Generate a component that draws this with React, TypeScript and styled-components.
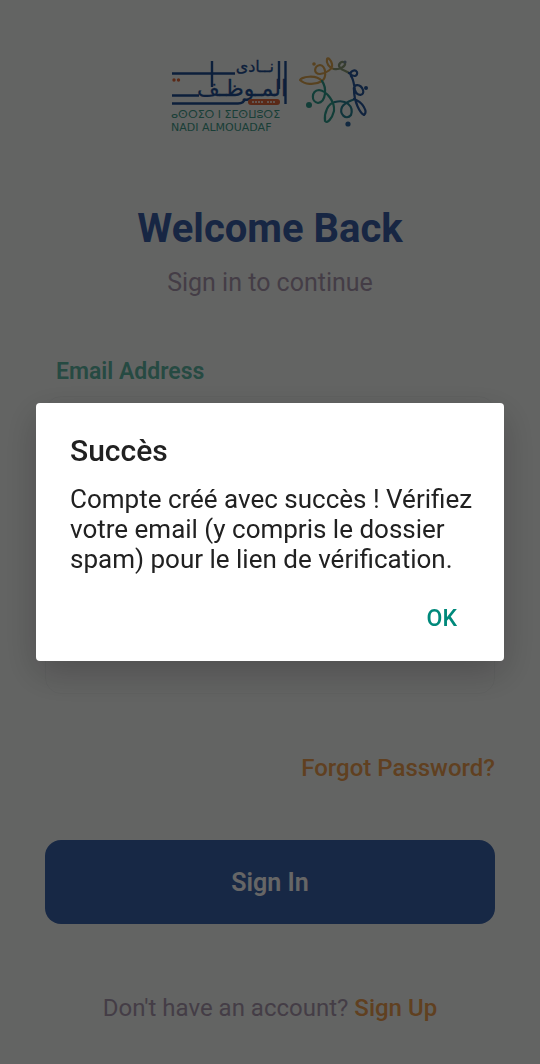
import React, { useState } from "react";
import styled, { createGlobalStyle, css } from "styled-components";

const GlobalStyle = createGlobalStyle`
  * { box-sizing: border-box; }
  body {
    margin: 0;
    background: #f8faf8;
    font-family: Roboto, "Liberation Sans", sans-serif;
  }
`;

const Page = styled.main`
  display: flex;
  flex-direction: column;
  align-items: stretch;
  min-height: 100vh;
  padding: 48px 45px 32px;
  background: #f8faf8;
`;

const Logo = styled.svg`
  align-self: center;
  width: 210px;
  height: 90px;
`;

const Title = styled.h1`
  margin: 65px 0 0;
  font-size: 40px;
  line-height: 52px;
  font-weight: 700;
  text-align: center;
  color: #3a5fa8;
`;

const Subtitle = styled.p`
  margin: 12px 0 0;
  font-size: 25px;
  line-height: 32px;
  text-align: center;
  color: #ab99af;
`;

const Form = styled.form`
  display: flex;
  flex-direction: column;
  margin-top: 57px;
`;

const Fields = styled.div`
  display: flex;
  flex-direction: column;
  gap: 90px;
`;

const FieldGroup = styled.div`
  display: flex;
  flex-direction: column;
  gap: 8px;
`;

const Label = styled.label`
  padding-left: 11px;
  font-size: 23px;
  line-height: 32px;
  font-weight: 600;
  color: #5fb8a6;
`;

const Field = styled.input`
  height: 84px;
  padding: 0 20px;
  border: 1px solid #eff2f0;
  border-radius: 16px;
  background: #f8faf8;
  font: inherit;
  font-size: 24px;
`;

const linkStyle = css`
  font-size: 24px;
  line-height: 32px;
  font-weight: 500;
  text-decoration: none;
  color: #f0a050;
`;

const ForgotLink = styled.a`
  ${linkStyle}
  align-self: flex-end;
  margin-top: 58px;
`;

const SubmitButton = styled.button`
  height: 84px;
  margin-top: 56px;
  border: 0;
  border-radius: 16px;
  background: #3a64ac;
  color: #ffffff;
  font-family: inherit;
  font-size: 25px;
  font-weight: 600;
`;

const Footer = styled.p`
  margin: 68px 0 0;
  font-size: 24px;
  line-height: 32px;
  text-align: center;
  color: #ab99af;
`;

const FooterLink = styled.a`
  ${linkStyle}
`;

const Overlay = styled.div`
  position: fixed;
  inset: 0;
  display: flex;
  align-items: center;
  justify-content: center;
  padding: 0 36px;
  background: rgba(0, 0, 0, 0.6);
`;

const Dialog = styled.section`
  width: 100%;
  padding: 32px 28px 16px 34px;
  border-radius: 4px;
  background: #ffffff;
  box-shadow: 0 12px 36px rgba(0, 0, 0, 0.22);
  color: #212121;
`;

const DialogTitle = styled.h2`
  margin: 0;
  font-size: 30px;
  line-height: 32px;
  font-weight: 500;
`;

const DialogText = styled.p`
  margin: 17px 0 0;
  font-size: 26px;
  line-height: 30px;
`;

const DialogActions = styled.div`
  display: flex;
  justify-content: flex-end;
  margin-top: 17px;
  padding-right: 6px;
`;

const DialogButton = styled.button`
  height: 54px;
  padding: 0 13px;
  border: 0;
  background: transparent;
  color: #00897b;
  font-family: inherit;
  font-size: 23px;
  font-weight: 500;
`;

const ORANGE = "#e0673a";
const NAVY = "#1f4f94";

function BrandLogo() {
  return (
    <Logo viewBox="165 48 210 90" role="img" aria-label="Nadi Almouadaf">
      <g fill="none" stroke={NAVY} strokeWidth="2.4">
        <path d="M172 73.500h63M172 95.500h27M172 103.500h66q6 0 7-5M285.500 61v43M279 61v28M212 61v26" />
      </g>
      <g fill={NAVY} stroke={NAVY} strokeWidth="0.300" fontFamily="DejaVu Sans">
        <text x="274" y="72" fontSize="16" direction="rtl">نــادى</text>
        <text x="287" y="96" fontSize="22" direction="rtl">المـوظـف</text>
      </g>
      <rect x="248" y="99" width="32" height="6" rx="3" fill={ORANGE} />
      <path d="M252 102h12M267 102h9" stroke="#f6d5c8" strokeWidth="2" strokeDasharray="2 1" />
      <g fill={ORANGE}>
        <circle cx="174" cy="80" r="1.700" />
        <circle cx="178.500" cy="80" r="1.700" />
      </g>
      <g fill="#3f9c8a" fontFamily="DejaVu Sans" fontSize="11">
        <text x="171" y="118">ⴰⵙⵔⵉⵔ ⵏ ⵉⵎⵙⵡⵓⵔⵉ</text>
        <text x="171" y="131">NADI ALMOUADAF</text>
      </g>
      <g fill="none" strokeWidth="2.200" strokeLinecap="round" strokeLinejoin="round">
        <path stroke="#dba552" d="M322 81C316 74 301 77 300 80C304 84 314 86 322 81M322 81C327 77 326 66 320 65C314 66 313 74 320 74C327 73 333 69 332 64C331 60 328 57 327 59C326 63 329 68 334 69" />
        <path stroke="#8c9c78" d="M334 69C340 70 346 66 345 63C342 60 337 64 340 68C342 70 346 71 349 73" />
        <path stroke="#2f9b8c" d="M322 81C327 88 326 102 318 103C311 102 311 91 319 90C327 91 335 102 334 111C332 119 327 124 325 121C324 113 328 103 335 102" />
        <path stroke="#2a8394" d="M335 102C346 99 354 106 351 115C346 121 339 114 342 107C345 102 350 101 355 99" />
        <path stroke="#28579b" d="M349 73C354 78 358 76 357 72C355 69 349 71 351 76C354 80 354 86 355 90C357 97 365 96 363 90C361 84 353 83 354 90C354 102 360 113 364 115C368 112 363 102 354 99" />
      </g>
      <g>
        <circle cx="309" cy="105" r="3" fill="#2f9b8c" />
        <circle cx="348" cy="124" r="2.600" fill="#2d68a2" />
        <circle cx="366" cy="88" r="2" fill="#28579b" />
        <circle cx="345" cy="62" r="1.600" fill="#7890a0" />
        <circle cx="314" cy="64" r="1.800" fill="#dba552" />
      </g>
    </Logo>
  );
}

export default function App() {
  const [open, setOpen] = useState(true);
  return (
    <>
      <GlobalStyle />
      <Page>
        <BrandLogo />
        <Title>Welcome Back</Title>
        <Subtitle>Sign in to continue</Subtitle>
        <Form onSubmit={(e) => e.preventDefault()}>
          <Fields>
            <FieldGroup>
              <Label htmlFor="email">Email Address</Label>
              <Field id="email" type="email" />
            </FieldGroup>
            <FieldGroup>
              <Label htmlFor="password">Password</Label>
              <Field id="password" type="password" />
            </FieldGroup>
          </Fields>
          <ForgotLink href="#forgot">Forgot Password?</ForgotLink>
          <SubmitButton type="submit">Sign In</SubmitButton>
        </Form>
        <Footer>
          Don't have an account? <FooterLink href="#signup">Sign Up</FooterLink>
        </Footer>
      </Page>
      {open && (
        <Overlay>
          <Dialog role="alertdialog" aria-modal="true" aria-labelledby="dialog-title" aria-describedby="dialog-text">
            <DialogTitle id="dialog-title">Succès</DialogTitle>
            <DialogText id="dialog-text">
              Compte créé avec succès ! Vérifiez votre email (y compris le dossier spam) pour le lien de vérification.
            </DialogText>
            <DialogActions>
              <DialogButton type="button" onClick={() => setOpen(false)}>OK</DialogButton>
            </DialogActions>
          </Dialog>
        </Overlay>
      )}
    </>
  );
}
